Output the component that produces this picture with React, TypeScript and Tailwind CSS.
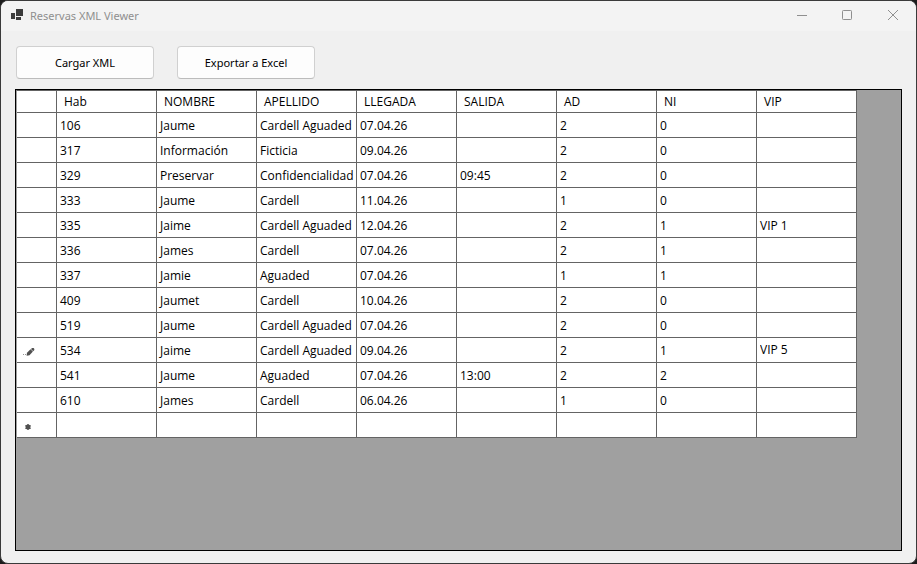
const columns = ["Hab", "NOMBRE", "APELLIDO", "LLEGADA", "SALIDA", "AD", "NI", "VIP"]

const reservas = [
  ["106", "Jaume", "Cardell Aguaded", "07.04.26", "", "2", "0", ""],
  ["317", "Información", "Ficticia", "09.04.26", "", "2", "0", ""],
  ["329", "Preservar", "Confidencialidad", "07.04.26", "09:45", "2", "0", ""],
  ["333", "Jaume", "Cardell", "11.04.26", "", "1", "0", ""],
  ["335", "Jaime", "Cardell Aguaded", "12.04.26", "", "2", "1", "VIP 1"],
  ["336", "James", "Cardell", "07.04.26", "", "2", "1", ""],
  ["337", "Jamie", "Aguaded", "07.04.26", "", "1", "1", ""],
  ["409", "Jaumet", "Cardell", "10.04.26", "", "2", "0", ""],
  ["519", "Jaume", "Cardell Aguaded", "07.04.26", "", "2", "0", ""],
  ["534", "Jaime", "Cardell Aguaded", "09.04.26", "", "2", "1", "VIP 5"],
  ["541", "Jaume", "Aguaded", "07.04.26", "13:00", "2", "2", ""],
  ["610", "James", "Cardell", "06.04.26", "", "1", "0", ""],
]

const editingRow = 9

const buttonClass = "h-[33px] w-[138px] rounded border border-[#d0d0d0] border-b-[#bcbcbc] bg-[#fdfdfd] text-black"
const cellClass = "border-r border-b border-[#646464] p-0"

const AppIcon = () => (
  <svg width="12" height="12" viewBox="0 0 12 12" fill="#3c3c3c" shapeRendering="crispEdges" aria-hidden="true">
    <rect x="0" y="4" width="4" height="6" />
    <rect x="5" y="0" width="7" height="7" />
    <rect x="5" y="8" width="5" height="3" />
  </svg>
)

const PencilIcon = () => (
  <svg width="12" height="8" viewBox="0 0 12 8" fill="#505050" className="mt-1 ml-[6px]" aria-hidden="true">
    <rect x="0" y="6" width="1" height="1" opacity="0.6" />
    <rect x="2" y="6" width="1" height="1" opacity="0.6" />
    <path d="M3.6 7.8 4 4.8 7.5 1.3 9.9 3.6 6.5 7.3Z" />
    <path d="M7.9 1 9.2 0H10.6L11.4 1 11.2 2.2 10.2 3.3Z" />
  </svg>
)

const NewRowIcon = () => (
  <svg width="6" height="6" viewBox="0 0 6 6" className="mt-1 ml-2" aria-hidden="true">
    <path d="M3 0v6M.4 1.5l5.2 3M5.6 1.5l-5.2 3" stroke="#505050" strokeWidth="1.3" />
    <circle cx="3" cy="3" r="2.5" fill="#505050" />
  </svg>
)

const TitleBar = () => (
  <header className="flex h-[30px] items-center justify-between bg-[#f3f3f3] pb-[2px]">
    <div className="flex items-center gap-[7px] pl-[10px]">
      <AppIcon />
      <h1 className="pt-[2px] text-[#8f8f8f]">Reservas XML Viewer</h1>
    </div>
    <div className="flex">
      <button aria-label="Minimizar" className="flex h-7 w-[45px] items-center justify-center">
        <svg width="10" height="10" viewBox="0 0 10 10" stroke="#8f8f8f" fill="none">
          <path d="M0 5.5h10" />
        </svg>
      </button>
      <button aria-label="Maximizar" className="flex h-7 w-[46px] items-center justify-center">
        <svg width="10" height="10" viewBox="0 0 10 10" stroke="#8f8f8f" fill="none">
          <rect x="0.5" y="0.5" width="9" height="9" rx="0.8" />
        </svg>
      </button>
      <button aria-label="Cerrar" className="flex h-7 w-[46px] items-center justify-center">
        <svg width="10" height="10" viewBox="0 0 10 10" stroke="#8f8f8f" fill="none">
          <path d="M0 0l10 10M10 0L0 10" />
        </svg>
      </button>
    </div>
  </header>
)

const ReservasTable = () => (
  <table className="w-[841px] table-fixed border-separate border-spacing-0 border-t border-l border-[#646464] border-l-[#a0a0a0] bg-white font-['Open_Sans','Noto_Sans',sans-serif] text-[12px] leading-4 text-black">
    <colgroup>
      <col className="w-10" />
      {columns.map((name) => (
        <col key={name} className="w-[100px]" />
      ))}
    </colgroup>
    <thead>
      <tr className="h-[22px]">
        <td className={cellClass}></td>
        {columns.map((name) => (
          <th key={name} scope="col" className={`${cellClass} pl-[7px] text-left font-normal`}>{name}</th>
        ))}
      </tr>
    </thead>
    <tbody>
      {reservas.map((row, i) => (
        <tr key={row[0]} className="h-[25px]">
          <td className={cellClass}>{i === editingRow && <PencilIcon />}</td>
          {row.map((value, j) =>
            i === editingRow && columns[j] === "VIP" ? (
              <td key={columns[j]} className={`${cellClass} pl-[3px]`}>
                <input aria-label="VIP" defaultValue={value} className="block h-4 w-full bg-white outline-none" />
              </td>
            ) : (
              <td key={columns[j]} className={`${cellClass} pt-[2px] pl-[3px] whitespace-nowrap`}>{value}</td>
            )
          )}
        </tr>
      ))}
      <tr className="h-[25px]">
        <td className={cellClass}><NewRowIcon /></td>
        {columns.map((name) => (
          <td key={name} className={cellClass}></td>
        ))}
      </tr>
    </tbody>
  </table>
)

const App = () => {
  return (
    <div className="flex min-h-screen bg-[#1c1c1c] font-['Noto_Sans','Open_Sans',sans-serif] text-[11px] leading-4">
      <div className="flex min-w-0 flex-1 flex-col overflow-hidden rounded-lg border border-[#3a3a3a] bg-[#f0f0f0]">
        <TitleBar />

        <main className="flex flex-1 flex-col gap-[10px] px-[14px] pt-[15px] pb-3">
          <div className="flex gap-[23px] pl-px">
            <button className={buttonClass}>Cargar XML</button>
            <button className={buttonClass}>Exportar a Excel</button>
          </div>

          <div className="flex-1 overflow-hidden border border-black bg-[#a0a0a0]">
            <ReservasTable />
          </div>
        </main>
      </div>
    </div>
  )
}

export default App
